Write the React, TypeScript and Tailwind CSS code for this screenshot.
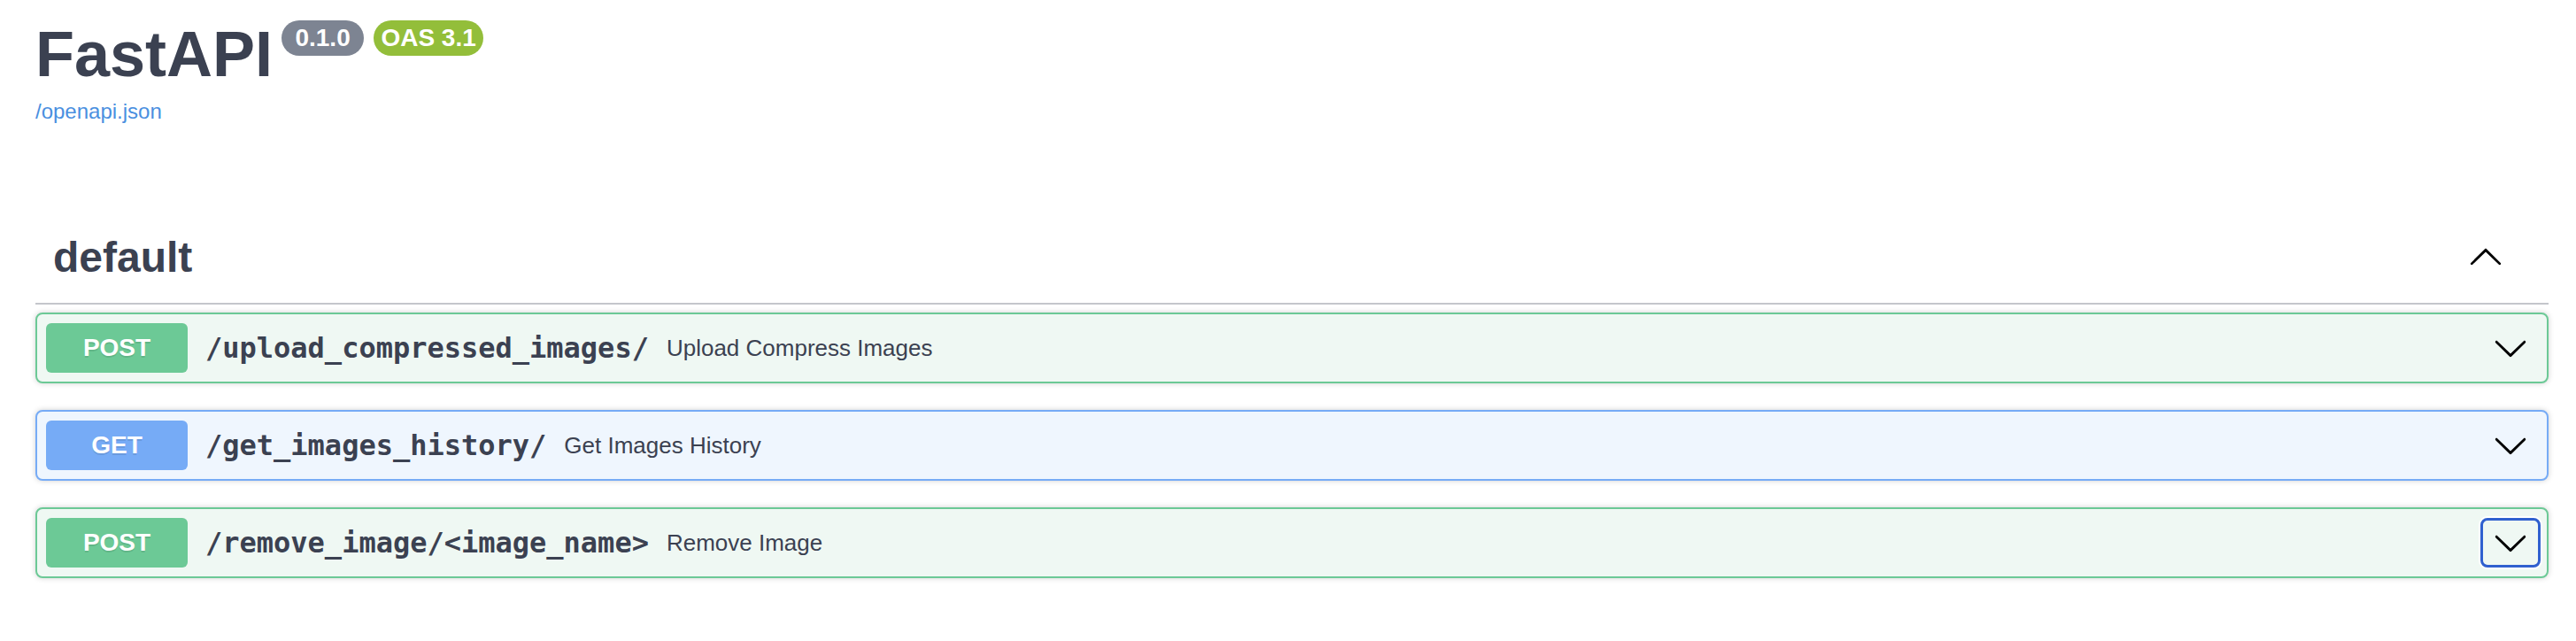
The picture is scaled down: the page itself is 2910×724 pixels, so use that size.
import React from "react";

const SANS = "font-['Liberation_Sans',Arial,sans-serif]";

function ChevronDown() {
  return (
    <svg viewBox="0 0 20 20" width={40} height={40} fill="#000">
      <path d="M17.418 6.109c.272-.268.709-.268.979 0s.271.701 0 .969l-7.908 7.83c-.27.268-.707.268-.979 0l-7.908-7.83c-.27-.268-.27-.701 0-.969.271-.268.709-.268.979 0L10 13.25l7.418-7.141z" />
    </svg>
  );
}

function ChevronUp() {
  return (
    <svg viewBox="0 0 20 20" width={40} height={40} fill="#000">
      <path d="M17.418 14.908C17.69 15.176 18.127 15.176 18.397 14.908C18.667 14.64 18.668 14.207 18.397 13.939L10.489 6.109C10.219 5.841 9.782 5.841 9.51 6.109L1.602 13.939C1.332 14.207 1.332 14.64 1.602 14.908C1.873 15.176 2.311 15.176 2.581 14.908L10 7.767L17.418 14.908Z" />
    </svg>
  );
}

type Op = {
  method: "POST" | "GET";
  path: string;
  desc: string;
  focused?: boolean;
};

const ops: Op[] = [
  { method: "POST", path: "/upload_compressed_images/", desc: "Upload Compress Images" },
  { method: "GET", path: "/get_images_history/", desc: "Get Images History" },
  { method: "POST", path: "/remove_image/<image_name>", desc: "Remove Image", focused: true },
];

function OpBlock({ op }: { op: Op }) {
  const isPost = op.method === "POST";
  return (
    <div
      className={
        "mb-[30px] rounded-[8px] border-2 shadow-[0_0_6px_rgba(0,0,0,0.19)] " +
        (isPost ? "border-[#6cc996] bg-[#eff8f3]" : "border-[#76abf6] bg-[#eff6fe]")
      }
    >
      <div className="flex items-center pl-[10px] pr-[7px] py-[10px]">
        <span
          className={
            SANS +
            " flex h-[56px] w-[160px] shrink-0 items-center justify-center rounded-[6px] text-[28px] font-bold text-white [text-shadow:0_2px_0_rgba(0,0,0,0.1)] " +
            (isPost ? "bg-[#6cc996]" : "bg-[#76abf6]")
          }
        >
          {op.method}
        </span>
        <span className="px-[20px] font-['DejaVu_Sans_Mono',monospace] text-[32px] font-bold text-[#3b4151]">
          {op.path}
        </span>
        <span className={SANS + " flex-1 text-[26px] text-[#3b4151]"}>{op.desc}</span>
        <div
          className={
            "flex h-[56px] w-[68px] shrink-0 items-center justify-center rounded-[8px] " +
            (op.focused
              ? "border-[3px] border-[#3060cf] shadow-[0_0_0_2px_#ffffff]"
              : "border-[3px] border-transparent")
          }
        >
          <ChevronDown />
        </div>
      </div>
    </div>
  );
}

export default function App() {
  return (
    <div className={SANS + " min-h-[724px] w-full bg-white pl-[40px] pr-[31px] pt-[21px] text-[#3b4151]"}>
      <div className="flex items-start">
        <h1 className="text-[72px] font-bold leading-[80px] text-[#3b4151]">FastAPI</h1>
        <span className="ml-[10px] mt-[2px] flex h-[40px] w-[93px] items-center justify-center rounded-full bg-[#7d8492] text-[28px] font-bold text-white">
          0.1.0
        </span>
        <span className="ml-[11px] mt-[2px] flex h-[40px] w-[124px] items-center justify-center rounded-full bg-[#93be3a] text-[28px] font-bold text-white">
          OAS 3.1
        </span>
      </div>
      <div className="mt-[11px] text-[24px] leading-[28px] text-[#4a8fe0]">/openapi.json</div>

      <div className="mt-[103px] flex items-center justify-between border-b-2 border-[#c4c6cb] pb-[23px] pl-[20px] pr-[51px] pt-[20px]">
        <h3 className="text-[48px] font-bold leading-[56px] text-[#3b4151]">default</h3>
        <div className="mb-[4px]">
          <ChevronUp />
        </div>
      </div>

      <div className="mt-[9px]">
        {ops.map((op) => (
          <OpBlock key={op.path} op={op} />
        ))}
      </div>
    </div>
  );
}
